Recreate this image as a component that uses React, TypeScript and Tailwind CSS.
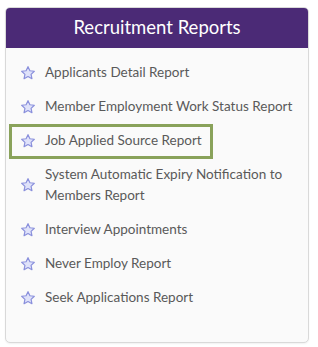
const reports = [
  { title: "Applicants Detail Report" },
  { title: "Member Employment Work Status Report" },
  { title: "Job Applied Source Report", highlighted: true },
  { title: "System Automatic Expiry Notification to Members Report" },
  { title: "Interview Appointments" },
  { title: "Never Employ Report" },
  { title: "Seek Applications Report" },
];

function StarIcon() {
  return (
    <svg width="16" height="16" viewBox="0 0 24 24" className="shrink-0">
      <path
        d="M12 2.5l2.9 6.1 6.6.8-4.9 4.6 1.3 6.6L12 17.3l-5.9 3.3 1.3-6.6-4.9-4.6 6.6-.8z"
        fill="#dfe2fa"
        stroke="#8a90dc"
        strokeWidth="1.8"
        strokeLinejoin="round"
      />
    </svg>
  );
}

export default function App() {
  return (
    <div className="min-h-[347px] w-[318px] bg-white pl-[5px] pt-[7px] font-['Lato','Open_Sans',sans-serif]">
      <div className="w-[304px] overflow-hidden rounded-[5px] border border-[#d9d9d9] bg-[#fafafa] shadow-[0_1px_2px_rgba(0,0,0,0.06)]">
        <div className="flex h-[40px] items-center justify-center bg-[#4b2a76] text-[18.5px] text-white">
          Recruitment Reports
        </div>
        <ul className="flex flex-col gap-[13px] pb-[34px] pl-[14px] pr-[8px] pt-[14px]">
          {reports.map((r) => (
            <li
              key={r.title}
              className="relative flex w-fit items-center gap-[9px] text-[13.5px] leading-[21px] text-[#595959]"
            >
              {r.highlighted && (
                <span className="absolute -bottom-[8px] -left-[11px] -right-[11px] -top-[6px] border-[3px] border-[#89a25a]" />
              )}
              <StarIcon />
              <span>{r.title}</span>
            </li>
          ))}
        </ul>
      </div>
    </div>
  );
}
